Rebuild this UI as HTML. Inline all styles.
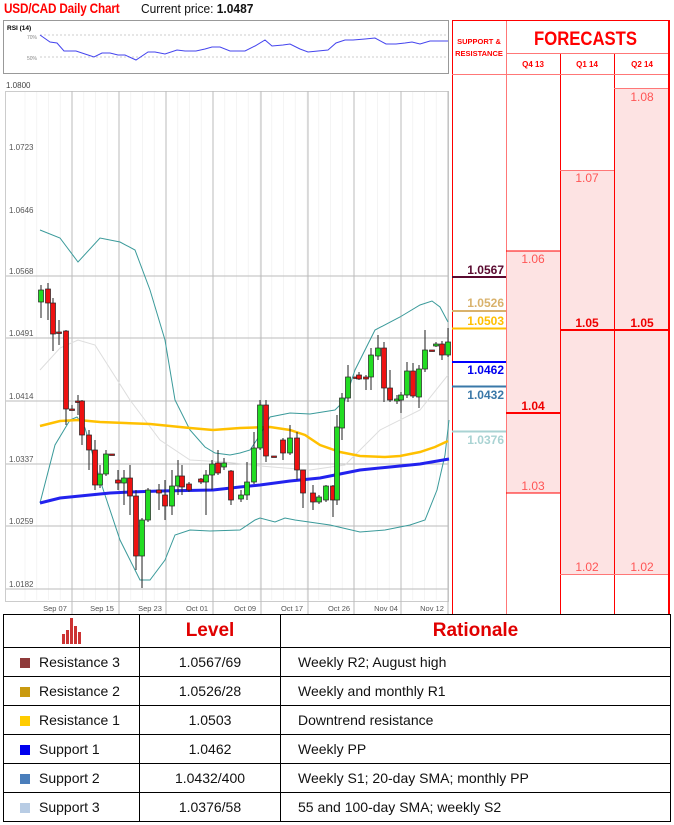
<!DOCTYPE html>
<html><head><meta charset="utf-8">
<style>
*{margin:0;padding:0;box-sizing:border-box}
body{width:674px;height:825px;background:#fff;position:relative;overflow:hidden;font-family:"Liberation Sans",sans-serif}
.t{position:absolute;white-space:nowrap}
table{position:absolute;left:3px;top:614px;width:668px;border-collapse:collapse}
td{border:1.5px solid #000;height:29px;font-size:14px;color:#111}
.sq{display:inline-block;width:10px;height:10px;margin:0 9px 0 16px;vertical-align:-1px}
</style></head><body>
<div class="t" style="left:4px;top:1px;font-size:13.5px;font-weight:bold;color:#f00;transform:scaleX(0.87);transform-origin:0 0;letter-spacing:-0.2px">USD/CAD Daily Chart</div>
<div class="t" style="left:141px;top:1px;font-size:13px;color:#111;transform:scaleX(0.92);transform-origin:0 0">Current price: <b>1.0487</b></div>

<svg id="ch" width="674" height="825" style="position:absolute;left:0;top:0" xmlns="http://www.w3.org/2000/svg">
<rect x="3.5" y="20.5" width="445" height="53" fill="#fff" stroke="#999"/>
<text x="7" y="30" font-size="6.5" font-weight="bold" font-family="Liberation Sans">RSI (14)</text>
<text x="27" y="39" font-size="5" fill="#888" font-family="Liberation Sans">70%</text>
<text x="27" y="60" font-size="5" fill="#888" font-family="Liberation Sans">50%</text>
<line x1="40" y1="35" x2="448" y2="35" stroke="#999" stroke-dasharray="2,2" stroke-width="0.6"/>
<line x1="40" y1="57" x2="448" y2="57" stroke="#999" stroke-dasharray="2,2" stroke-width="0.6"/>
<polyline fill="none" stroke="#4444ee" stroke-width="1" points="40,35 50,42 57,43 64,51 76,51 85,54 94,57 102,53 110,53 118,55 125,55 136,60 148,52 155,52 165,54 177,50 185,51 196,51 205,49 212,47 220,47 230,51 245,51 255,46 265,40 272,46 283,45 290,44 300,49 308,52 318,51 328,50 336,43 345,40 353,40 365,39 375,38 386,44 396,44 405,43 412,42 420,44 430,41 440,41 448,41"/>
<text x="6" y="88" font-size="8" fill="#444" font-family="Liberation Sans">1.0800</text>
<rect x="5.5" y="91.5" width="443" height="510" fill="#fff" stroke="#ccc"/>
<g id="minor" stroke="#f2f2f2" stroke-width="0.8"></g>
<g stroke="#bbb" stroke-width="1">
<line x1="72" y1="91" x2="72" y2="614"/><line x1="119" y1="91" x2="119" y2="614"/><line x1="166" y1="91" x2="166" y2="614"/><line x1="213" y1="91" x2="213" y2="614"/><line x1="261" y1="91" x2="261" y2="614"/><line x1="308" y1="91" x2="308" y2="614"/><line x1="354" y1="91" x2="354" y2="614"/><line x1="401" y1="91" x2="401" y2="614"/><line x1="448" y1="91" x2="448" y2="614"/>
<line x1="6" y1="276" x2="448" y2="276"/><line x1="6" y1="338" x2="448" y2="338"/><line x1="6" y1="401" x2="448" y2="401"/><line x1="6" y1="464" x2="448" y2="464"/><line x1="6" y1="526" x2="448" y2="526"/><line x1="6" y1="589" x2="448" y2="589"/>
</g>
<g font-size="8" fill="#555" font-family="Liberation Sans">
<text x="9" y="150">1.0723</text><text x="9" y="213">1.0646</text><text x="9" y="274">1.0568</text><text x="9" y="336">1.0491</text><text x="9" y="399">1.0414</text><text x="9" y="462">1.0337</text><text x="9" y="524">1.0259</text><text x="9" y="587">1.0182</text>
</g>
<g font-size="7.5" fill="#555" font-family="Liberation Sans" text-anchor="middle">
<text x="55" y="611">Sep 07</text><text x="102" y="611">Sep 15</text><text x="150" y="611">Sep 23</text><text x="197" y="611">Oct 01</text><text x="245" y="611">Oct 09</text><text x="292" y="611">Oct 17</text><text x="339" y="611">Oct 26</text><text x="386" y="611">Nov 04</text><text x="432" y="611">Nov 12</text>
</g>
<polyline fill="none" stroke="#ddd" stroke-width="1" points="40,370 60,348 78,340 95,345 130,400 160,440 190,460 225,462 260,466 310,470 345,465 380,430 420,410 448,375"/>
<polyline fill="none" stroke="#3a9a9a" stroke-width="1" points="40,230 60,238 78,262 100,238 120,242 135,250 150,290 165,340 175,400 190,430 205,447 215,453 230,455 240,453 250,450 260,435 270,417 290,413 310,414 335,410 345,400 355,370 375,330 400,317 420,305 432,301 440,307 448,322"/>
<polyline fill="none" stroke="#3a9a9a" stroke-width="1" points="40,503 55,445 70,420 77,417 85,428 100,480 120,540 140,580 150,580 165,560 175,535 190,530 210,531 240,530 255,520 260,518 275,522 285,518 295,520 330,525 360,532 385,530 410,525 425,520 437,490 445,455 449,420"/>
<polyline fill="none" stroke="#ffc000" stroke-width="2.5" points="40,426 60,421 78,420 100,422 150,424 190,428 213,430 240,428 270,427 290,430 305,435 320,445 340,452 360,456 385,457 400,456 420,452 435,447 448,441"/>
<polyline fill="none" stroke="#2222ee" stroke-width="3" points="40,503 60,498 80,496 110,493 130,492 160,491 213,490 240,487 260,485 290,481 320,478 340,474 360,470 390,467 420,464 449,459"/>
<g id="cs"></g>
<rect x="452" y="20" width="217" height="595" fill="#fff"/>
<rect x="506" y="251" width="54" height="242" fill="#fde3e3"/>
<rect x="560" y="170" width="109" height="404" fill="#fde3e3"/>
<rect x="614" y="88" width="55" height="82" fill="#fde3e3"/>
<g stroke="#f00" stroke-width="1">
<line x1="452.5" y1="20" x2="452.5" y2="615"/>
<line x1="506.5" y1="20" x2="506.5" y2="615" stroke="#f77"/>
<line x1="560.5" y1="53" x2="560.5" y2="615"/>
<line x1="614.5" y1="53" x2="614.5" y2="615"/>
<line x1="452" y1="20.5" x2="670" y2="20.5"/>
<line x1="506" y1="53.5" x2="669" y2="53.5" stroke="#f77"/>
<line x1="452" y1="74.5" x2="669" y2="74.5" stroke="#f77"/>
<line x1="614" y1="88.5" x2="669" y2="88.5" stroke="#f77"/>
<line x1="560" y1="170.5" x2="614" y2="170.5" stroke="#f77"/>
<line x1="506" y1="251" x2="560" y2="251"/>
<line x1="560" y1="330" x2="669" y2="330" stroke-width="2"/>
<line x1="506" y1="413" x2="560" y2="413" stroke-width="2"/>
<line x1="506" y1="493" x2="560" y2="493"/>
<line x1="560" y1="574.5" x2="669" y2="574.5" stroke="#f77"/>
</g>
<line x1="669" y1="20" x2="669" y2="615" stroke="#f00" stroke-width="2"/>
<text x="479" y="44" font-size="7.5" font-weight="bold" fill="#f00" text-anchor="middle" font-family="Liberation Sans">SUPPORT &amp;</text>
<text x="479" y="56" font-size="7.5" font-weight="bold" fill="#f00" text-anchor="middle" font-family="Liberation Sans">RESISTANCE</text>
<text x="534" y="45" font-size="19" font-weight="bold" fill="#f00" textLength="103" lengthAdjust="spacingAndGlyphs" font-family="Liberation Sans">FORECASTS</text>
<g font-size="8" font-weight="bold" fill="#f00" text-anchor="middle" font-family="Liberation Sans">
<text x="533" y="67">Q4 13</text><text x="587" y="67">Q1 14</text><text x="642" y="67">Q2 14</text>
</g>
<g font-size="12" fill="#f55" text-anchor="middle" font-family="Liberation Sans">
<text x="642" y="101">1.08</text><text x="587" y="182">1.07</text><text x="533" y="263">1.06</text><text x="533" y="490">1.03</text><text x="587" y="571">1.02</text><text x="642" y="571">1.02</text>
</g>
<g font-size="12" font-weight="bold" fill="#e00" text-anchor="middle" font-family="Liberation Sans">
<text x="587" y="327">1.05</text><text x="642" y="327">1.05</text><text x="533" y="410">1.04</text>
</g>
<g stroke-width="2">
<line x1="452" y1="277" x2="506" y2="277" stroke="#5a0a30"/>
<line x1="452" y1="311" x2="506" y2="311" stroke="#d9b26c"/>
<line x1="452" y1="328.5" x2="506" y2="328.5" stroke="#ffc000"/>
<line x1="452" y1="362" x2="506" y2="362" stroke="#0000ff"/>
<line x1="452" y1="386.5" x2="506" y2="386.5" stroke="#3a78a8"/>
<line x1="452" y1="431.5" x2="506" y2="431.5" stroke="#a9d3d3"/>
</g>
<g font-size="12" font-weight="bold" text-anchor="end" font-family="Liberation Sans">
<text x="504" y="274" fill="#5a0a30">1.0567</text>
<text x="504" y="307" fill="#d9b26c">1.0526</text>
<text x="504" y="325" fill="#ffc000">1.0503</text>
<text x="504" y="374" fill="#0000ee">1.0462</text>
<text x="504" y="399" fill="#3a78a8">1.0432</text>
<text x="504" y="444" fill="#a9d3d3">1.0376</text>
</g>
</svg>

<table>
<tr style="height:33px"><td style="width:136px;text-align:center;height:33px">
<svg width="24" height="26" viewBox="0 0 24 26" style="vertical-align:middle"><g fill="#c33"><rect x="2" y="16" width="3" height="10"/><rect x="6" y="12" width="3" height="14"/><rect x="10" y="0" width="3" height="26"/><rect x="14" y="8" width="3" height="18"/><rect x="18" y="14" width="3" height="12"/></g></svg></td>
<td style="width:141px;text-align:center;font-size:19px;font-weight:bold;color:#e00000">Level</td>
<td style="text-align:center;font-size:19px;font-weight:bold;color:#e00000">Rationale</td></tr>
<tr><td><span class="sq" style="background:#8f3a3a"></span>Resistance 3</td><td style="text-align:center">1.0567/69</td><td style="padding-left:17px">Weekly R2; August high</td></tr>
<tr><td><span class="sq" style="background:#c99a10"></span>Resistance 2</td><td style="text-align:center">1.0526/28</td><td style="padding-left:17px">Weekly and monthly R1</td></tr>
<tr><td><span class="sq" style="background:#ffcc00"></span>Resistance 1</td><td style="text-align:center">1.0503</td><td style="padding-left:17px">Downtrend resistance</td></tr>
<tr><td><span class="sq" style="background:#0000ee"></span>Support 1</td><td style="text-align:center">1.0462</td><td style="padding-left:17px">Weekly PP</td></tr>
<tr><td><span class="sq" style="background:#4a7ebb"></span>Support 2</td><td style="text-align:center">1.0432/400</td><td style="padding-left:17px">Weekly S1; 20-day SMA; monthly PP</td></tr>
<tr><td><span class="sq" style="background:#b8cce4"></span>Support 3</td><td style="text-align:center">1.0376/58</td><td style="padding-left:17px">55 and 100-day SMA; weekly S2</td></tr>
</table>
<script>
var NS="http://www.w3.org/2000/svg";
var m=document.getElementById("minor");
for(var x=25;x<448;x+=11.75){var l=document.createElementNS(NS,"line");l.setAttribute("x1",x);l.setAttribute("x2",x);l.setAttribute("y1",92);l.setAttribute("y2",600);m.appendChild(l);}
var c=[[41,302,290,285,318],[48,289,303,283,320],[53,303,334,298,351],[59,332,333,320,345],[66,331,409,330,425],[72,409,409,405,410],[78,401,401,395,415],[82,401,435,400,445],[89,435,450,430,470],[95,450,485,440,490],[100,485,474,465,488],[106,474,454,450,476],[112,454,454,454,455],[118,480,483,470,490],[124,483,478,470,505],[130,478,496,465,515],[136,496,556,490,570],[142,556,520,518,588],[148,520,490,488,522],[159,490,493,484,510],[165,495,506,480,520],[172,506,486,470,515],[178,486,476,460,495],[182,476,487,465,495],[189,484,490,482,492],[201,479,482,478,484],[206,482,475,470,515],[212,475,464,460,490],[218,463,473,450,475],[224,467,463,458,470],[231,471,500,470,505],[241,499,495,490,502],[247,495,482,462,500],[254,482,448,432,484],[260,448,405,400,450],[266,405,456,400,462],[274,456,456,456,457],[283,440,453,438,460],[290,453,438,425,455],[297,438,470,432,480],[303,470,493,470,508],[313,493,502,485,510],[319,502,497,495,504],[326,500,486,485,502],[333,486,500,485,517],[337,500,427,415,505],[342,428,398,393,440],[348,398,377,365,402],[356,377,377,377,378],[359,375,379,372,380],[366,377,379,375,390],[371,377,355,348,390],[378,356,348,335,360],[384,348,388,342,402],[390,388,400,370,402],[397,401,399,395,404],[401,400,395,392,413],[407,395,371,362,398],[413,371,396,363,398],[419,397,369,365,408],[425,369,350,330,372],[432,350,350,350,351],[436,346,344,342,347],[442,344,355,341,360],[448,355,342,328,357]];
var g=document.getElementById("cs");
c.forEach(function(d){var w=document.createElementNS(NS,"line");w.setAttribute("x1",d[0]);w.setAttribute("x2",d[0]);w.setAttribute("y1",d[3]);w.setAttribute("y2",d[4]);w.setAttribute("stroke","#222");g.appendChild(w);
var r=document.createElementNS(NS,"rect");var t=Math.min(d[1],d[2]),h=Math.max(1.5,Math.abs(d[1]-d[2]));r.setAttribute("x",d[0]-2.5);r.setAttribute("y",t);r.setAttribute("width",5);r.setAttribute("height",h);r.setAttribute("fill",d[2]<d[1]?"#22dd22":"#ee1111");r.setAttribute("stroke","#222");r.setAttribute("stroke-width","0.7");g.appendChild(r);});
</script>
</body></html>
